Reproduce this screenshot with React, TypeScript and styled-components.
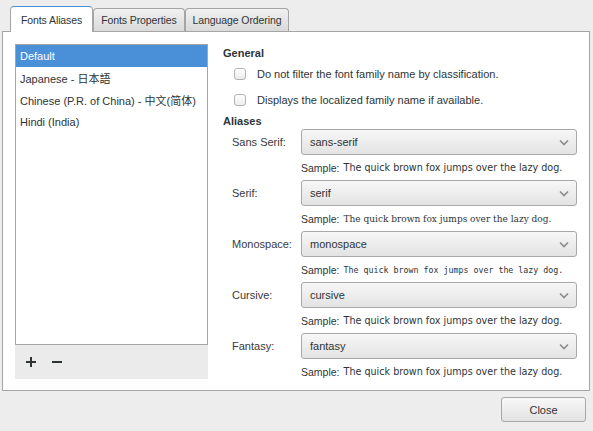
import styled, { createGlobalStyle } from "styled-components";
import { Fragment, useState } from "react";

const GlobalStyle = createGlobalStyle`
    *, *::before, *::after {
        box-sizing: border-box;
    }
    html, body {
        margin: 0;
        padding: 0;
        background: #ededed;
    }
    body {
        font-family: "Liberation Sans", "Noto Sans CJK SC", sans-serif;
        font-size: 11px;
        color: #2e3436;
    }
`;

const Window = styled.div`
    width: 593px;
    height: 431px;
    background: #ededed;
    display: flex;
    flex-direction: column;
    overflow: hidden;
`;

const Notebook = styled.div`
    display: flex;
    flex-direction: column;
    padding: 6px 3px 0 2px;
`;

const TabBar = styled.div`
    display: flex;
    align-items: flex-end;
    height: 25px;
    padding-left: 8px;
`;

const Tab = styled.div<{ $active?: boolean }>`
    height: ${p => (p.$active ? "26px" : "23px")};
    padding: 0 ${p => (p.$active ? "10px" : "7px")};
    display: flex;
    align-items: center;
    border: 1px solid #a5a5a5;
    border-bottom: none;
    border-top: 1px solid ${p => (p.$active ? "#4a90d9" : "#a5a5a5")};
    border-radius: 4px 4px 0 0;
    background: ${p => (p.$active ? "#ffffff" : "linear-gradient(#f1f1f1, #d9d9d9)")};
    margin-bottom: ${p => (p.$active ? "-1px" : "0")};
    position: relative;
    z-index: ${p => (p.$active ? 2 : 1)};
    font-size: 10.5px;
    letter-spacing: -0.1px;
    color: #2e3436;
    white-space: nowrap;
`;

const Page = styled.div`
    height: 360px;
    background: #ffffff;
    border: 1px solid #a5a5a5;
    display: flex;
    gap: 15px;
    padding: 12px 12px 11px 12px;
`;

const ListColumn = styled.div`
    width: 194px;
    display: flex;
    flex-direction: column;
`;

const ListBox = styled.div`
    flex: 1;
    border: 1px solid #a5a5a5;
    background: #fff;
`;

const ListRow = styled.div<{ $selected?: boolean }>`
    height: 22px;
    display: flex;
    align-items: center;
    padding-left: 4px;
    background: ${p => (p.$selected ? "#4a90d9" : "transparent")};
    color: ${p => (p.$selected ? "#ffffff" : "#2e3436")};
    font-size: 11px;
    white-space: nowrap;
`;

const ListToolbar = styled.div`
    height: 34px;
    background: #ebebeb;
    display: flex;
    align-items: center;
    gap: 10px;
    padding-left: 8px;
`;

const ToolButton = styled.button`
    width: 16px;
    height: 16px;
    padding: 0;
    border: none;
    background: none;
    display: flex;
    align-items: center;
    justify-content: center;
`;

const Settings = styled.div`
    flex: 1;
    display: flex;
    flex-direction: column;

    & > * {
        flex-shrink: 0;
    }
`;

const SectionTitle = styled.div<{ $h: number }>`
    font-weight: bold;
    font-size: 11px;
    height: ${p => p.$h}px;
    display: flex;
    align-items: center;
`;

const CheckRow = styled.label`
    display: flex;
    align-items: center;
    gap: 11px;
    height: 26px;
    padding-left: 11px;
    font-size: 11px;
`;

const CheckBox = styled.span`
    width: 12px;
    height: 12px;
    border: 1px solid #b3b3b3;
    border-radius: 3px;
    background: linear-gradient(#ffffff, #ececec);
`;

const AliasGrid = styled.div`
    display: grid;
    grid-template-columns: 69px 276px;
    grid-auto-rows: 26px 25px;
    padding-left: 9px;
`;

const AliasLabel = styled.div`
    display: flex;
    align-items: center;
    font-size: 11px;
    color: #3a3a3a;
`;

const Combo = styled.div`
    border: 1px solid #a8a8a8;
    border-radius: 3px;
    background: linear-gradient(#f7f7f7, #e3e3e3);
    display: flex;
    align-items: center;
    justify-content: space-between;
    padding: 0 7px 0 8px;
    font-size: 11px;
    color: #2e3436;
`;

const Sample = styled.div`
    grid-column: 2;
    display: flex;
    align-items: center;
    gap: 4px;
    font-size: 10.5px;
    white-space: nowrap;
`;

const SampleText = styled.span<{ $family: string; $size: number }>`
    font-family: ${p => p.$family};
    font-size: ${p => p.$size}px;
`;

const Footer = styled.div`
    flex: 1;
    display: flex;
    justify-content: flex-end;
    align-items: flex-start;
    padding: 6px 7px 0 0;
`;

const CloseButton = styled.button`
    width: 85px;
    height: 25px;
    border: 1px solid #a8a8a8;
    border-radius: 3px;
    background: linear-gradient(#f8f8f8, #e2e2e2);
    font-family: "Liberation Sans", sans-serif;
    font-size: 11px;
    color: #2e3436;
`;

const Chevron = () => (
    <svg width="10" height="7" viewBox="0 0 10 7">
        <polyline points="1,1.5 5,5.5 9,1.5" fill="none" stroke="#8a8d8a" strokeWidth="1.6"/>
    </svg>
);

const aliases = [
    { label: "Sans Serif:", value: "sans-serif", family: '"DejaVu Sans", sans-serif', size: 9.6 },
    { label: "Serif:", value: "serif", family: '"DejaVu Serif Condensed", "DejaVu Serif", serif', size: 10 },
    { label: "Monospace:", value: "monospace", family: '"DejaVu Sans Mono", monospace', size: 8.3 },
    { label: "Cursive:", value: "cursive", family: '"DejaVu Sans", sans-serif', size: 9.6 },
    { label: "Fantasy:", value: "fantasy", family: '"DejaVu Sans", sans-serif', size: 9.6 },
];

const languages = [
    "Default",
    "Japanese - 日本語",
    "Chinese (P.R. of China) - 中文(简体)",
    "Hindi (India)",
];

export default function App() {
    const [selected, setSelected] = useState(0);

    return (
        <Window>
            <GlobalStyle/>
            <Notebook>
                <TabBar>
                    <Tab $active>Fonts Aliases</Tab>
                    <Tab>Fonts Properties</Tab>
                    <Tab>Language Ordering</Tab>
                </TabBar>
                <Page>
                    <ListColumn>
                        <ListBox>
                            {languages.map((lang, i) => (
                                <ListRow key={lang} $selected={i === selected} onClick={() => setSelected(i)}>
                                    {lang}
                                </ListRow>
                            ))}
                        </ListBox>
                        <ListToolbar>
                            <ToolButton>
                                <svg width="12" height="12" viewBox="0 0 12 12">
                                    <path d="M6 1v10M1 6h10" stroke="#2e3436" strokeWidth="2"/>
                                </svg>
                            </ToolButton>
                            <ToolButton>
                                <svg width="12" height="12" viewBox="0 0 12 12">
                                    <path d="M1 6h10" stroke="#2e3436" strokeWidth="2"/>
                                </svg>
                            </ToolButton>
                        </ListToolbar>
                    </ListColumn>
                    <Settings>
                        <SectionTitle $h={17}>General</SectionTitle>
                        <CheckRow><CheckBox/>Do not filter the font family name by classification.</CheckRow>
                        <CheckRow><CheckBox/>Displays the localized family name if available.</CheckRow>
                        <SectionTitle $h={16}>Aliases</SectionTitle>
                        <AliasGrid>
                            {aliases.map(a => (
                                <Fragment key={a.label}>
                                    <AliasLabel>{a.label}</AliasLabel>
                                    <Combo>{a.value}<Chevron/></Combo>
                                    <Sample>
                                        Sample:
                                        <SampleText $family={a.family} $size={a.size}>
                                            The quick brown fox jumps over the lazy dog.
                                        </SampleText>
                                    </Sample>
                                </Fragment>
                            ))}
                        </AliasGrid>
                    </Settings>
                </Page>
            </Notebook>
            <Footer>
                <CloseButton>Close</CloseButton>
            </Footer>
        </Window>
    );
}
